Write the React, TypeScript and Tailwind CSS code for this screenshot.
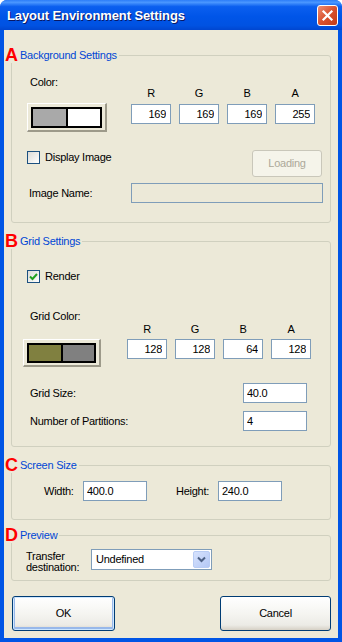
import React from 'react';

const Checkbox = ({ checked = false }: { checked?: boolean }) => (
  <span className="w-[13px] h-[13px] border border-[#1C5180] bg-[linear-gradient(135deg,#DCDCD7,#FFFFFF)] flex items-center justify-center shrink-0">
    {checked && (
      <svg width="9" height="9" viewBox="0 0 9 9">
        <path d="M1 4.5 L3.5 7 L8 2" fill="none" stroke="#21A121" strokeWidth="2" />
      </svg>
    )}
  </span>
);

const Swatch = ({ left, right, className }: { left: string; right: string; className: string }) => (
  <div className={`border-t border-l border-white border-b-2 border-r-2 border-b-[#9D9A8A] border-r-[#9D9A8A] bg-[#ECE9D8] pt-[3px] pl-[3px] pr-[3px] pb-[2px] ${className}`}>
    <div className="w-full h-full border-2 border-black flex">
      <div className="flex-1 border-r-2 border-black" style={{ background: left }} />
      <div className="flex-1" style={{ background: right }} />
    </div>
  </div>
);

const TextBox = ({ value, className = '' }: { value: string; className?: string }) => (
  <input
    readOnly
    value={value}
    className={`h-[20px] border border-[#7F9DB9] bg-white outline-none text-[11px] text-black ${className}`}
  />
);

const GroupBox = ({ letter, title, className, children }: { letter: string; title: string; className: string; children: React.ReactNode }) => (
  <fieldset className={`mx-[7px] border border-[#D0D0BF] rounded-[3px] min-w-0 ${className}`}>
    <legend className="ml-[-7px] flex items-center h-[16px] pr-[2px]">
      <span className="w-[15px] text-[#FF0000] font-bold text-[18px] leading-[16px] tracking-normal">{letter}</span>
      <span className="text-[#0046D5] leading-[13px]">{title}</span>
    </legend>
    {children}
  </fieldset>
);

const Rgba = ({ values, gapTop }: { values: string[]; gapTop: string }) => (
  <div className="flex gap-[8px]">
    {['R', 'G', 'B', 'A'].map((ch, i) => (
      <div key={ch} className="w-[40px] flex flex-col items-center">
        <span className="leading-[13px]">{ch}</span>
        <TextBox value={values[i]} className={`w-[40px] text-right pr-[4px] ${gapTop}`} />
      </div>
    ))}
  </div>
);

const xpButton =
  'border border-[#003C74] rounded-[3px] bg-[linear-gradient(to_bottom,#FFFFFF,#F5F5F1_50%,#ECEBE6_85%,#D6D0C5)] text-black';

export default function App() {
  return (
    <div className="w-[342px] h-[642px] flex flex-col bg-[#0055E5] rounded-t-[7px] overflow-hidden font-['Liberation_Sans',Arial,sans-serif] text-[11px] leading-[13px] tracking-[-0.25px] text-black">
      {/* Title bar */}
      <div className="h-[30px] shrink-0 flex items-center justify-between pl-[7px] pr-[4px] bg-[linear-gradient(to_bottom,#2C7DF8_0%,#4A97FF_8%,#0B5FEF_22%,#0055E8_55%,#0052E2_85%,#0046D0_100%)]">
        <span className="text-white font-bold text-[13px] leading-[16px] tracking-[-0.1px] [text-shadow:1px_1px_#0A1864] pt-[1px]">
          Layout Environment Settings
        </span>
        <div className="w-[21px] h-[21px] rounded-[3px] border border-white bg-[linear-gradient(135deg,#ED8E73,#D9512E_50%,#C33B16)] flex items-center justify-center">
          <svg width="13" height="13" viewBox="0 0 13 13">
            <path d="M2.5 2.5 L10.5 10.5 M10.5 2.5 L2.5 10.5" stroke="white" strokeWidth="2.2" strokeLinecap="square" />
          </svg>
        </div>
      </div>

      {/* Client */}
      <div className="flex-1 flex flex-col bg-[#ECE9D8] mx-[4px] mb-[4px]">
        <GroupBox letter="A" title="Background Settings" className="mt-[17px] pb-[19px]">
          <div className="flex pl-[15px] mt-[13px]">
            <div className="w-[104px] flex flex-col items-start">
              <span className="ml-[3px]">Color:</span>
              <Swatch left="#A9A9A9" right="#FFFFFF" className="mt-[14px] w-[80px] h-[29px]" />
            </div>
            <div className="pt-[11px]">
              <Rgba values={['169', '169', '169', '255']} gapTop="mt-[4px]" />
            </div>
          </div>
          <div className="flex items-start mt-[18px] pl-[15px] pr-[8px]">
            <label className="flex items-center gap-[5px] mt-[1px]">
              <Checkbox />
              <span>Display Image</span>
            </label>
            <button className="ml-auto w-[70px] h-[27px] border border-[#C9C7BA] rounded-[3px] bg-[#F5F4EA] text-[#ACA899]">
              Loading
            </button>
          </div>
          <div className="flex items-center mt-[6px] pl-[17px]">
            <span className="w-[102px]">Image Name:</span>
            <div className="w-[192px] h-[20px] border border-[#7F9DB9] bg-[#ECE9D8]" />
          </div>
        </GroupBox>

        <GroupBox letter="B" title="Grid Settings" className="mt-[10px] pb-[15px]">
          <label className="flex items-center gap-[5px] mt-[21px] ml-[15px]">
            <Checkbox checked />
            <span>Render</span>
          </label>
          <div className="mt-[27px] ml-[18px]">Grid Color:</div>
          <div className="flex pl-[11px]">
            <div className="w-[104px]">
              <Swatch left="#808040" right="#808080" className="mt-[16px] w-[78px] h-[28px]" />
            </div>
            <Rgba values={['128', '128', '64', '128']} gapTop="mt-[3px]" />
          </div>
          <div className="flex items-center mt-[16px] pl-[18px]">
            <span className="w-[213px]">Grid Size:</span>
            <TextBox value="40.0" className="w-[64px] pl-[3px]" />
          </div>
          <div className="flex items-center mt-[8px] pl-[18px]">
            <span className="w-[213px]">Number of Partitions:</span>
            <TextBox value="4" className="w-[64px] pl-[3px]" />
          </div>
        </GroupBox>

        <GroupBox letter="C" title="Screen Size" className="mt-[10px] pb-[18px]">
          <div className="flex items-center mt-[8px] pl-[32px]">
            <span className="w-[39px]">Width:</span>
            <TextBox value="400.0" className="w-[64px] pl-[3px]" />
            <span className="ml-[29px] w-[42px]">Height:</span>
            <TextBox value="240.0" className="w-[64px] pl-[3px]" />
          </div>
        </GroupBox>

        <GroupBox letter="D" title="Preview" className="mt-[7px] pb-[10px]">
          <div className="flex items-start h-[21px] mt-[6px] pl-[14px]">
            <span className="w-[65px] leading-[11px] mt-[2px]">
              Transfer
              <br />
              destination:
            </span>
            <div className="w-[121px] h-[21px] border border-[#7F9DB9] bg-white flex items-center pl-[4px] pr-[1px]">
              <span className="flex-1">Undefined</span>
              <span className="w-[17px] h-[17px] rounded-[2px] border border-[#B8CCF4] bg-[linear-gradient(135deg,#D6E2FD,#B4C8F5)] flex items-center justify-center">
                <svg width="9" height="7" viewBox="0 0 9 7">
                  <path d="M1 1.5 L4.5 5 L8 1.5" fill="none" stroke="#4D6185" strokeWidth="2" />
                </svg>
              </span>
            </div>
          </div>
        </GroupBox>

        <div className="flex justify-between mt-[15px] pl-[8px] pr-[7px]">
          <button className={`w-[103px] h-[35px] ${xpButton} shadow-[inset_0_0_0_1px_#CEE7FF,inset_0_-1px_0_2px_#98B8EA]`}>OK</button>
          <button className={`w-[111px] h-[35px] ${xpButton}`}>Cancel</button>
        </div>
      </div>
    </div>
  );
}
